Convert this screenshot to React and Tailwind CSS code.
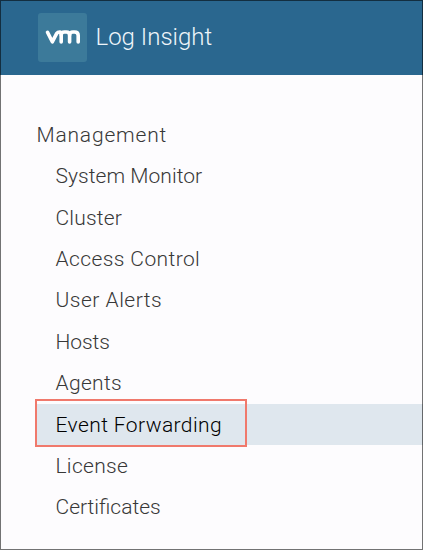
const items = [
  { label: "System Monitor", tracking: "tracking-[0.05px]" },
  { label: "Cluster", tracking: "tracking-[0.2px]" },
  { label: "Access Control", tracking: "tracking-[0.4px]" },
  { label: "User Alerts", tracking: "tracking-[0.5px]" },
  { label: "Hosts", tracking: "tracking-[-0.1px]" },
  { label: "Agents", tracking: "tracking-[0.3px]" },
  { label: "Event Forwarding", tracking: "tracking-[0.4px]", active: true },
  { label: "License", tracking: "tracking-[0.3px]" },
  { label: "Certificates", tracking: "tracking-[0px]" },
];

function Logo() {
  return (
    <div className="flex size-[49px] items-center justify-center rounded-[3px] bg-[#3c7a9a]">
      <svg width="36" height="16" viewBox="0 0 36 16" fill="none" stroke="#fff" strokeWidth="3.6" strokeLinecap="round" strokeLinejoin="round">
        <path d="M2.5 3.3 L7.3 12.8 L11.6 4.6 Q12.7 3 14.8 3 Q16.2 3 16.2 5 V13" />
        <path d="M16.2 6 Q16.2 3 19.4 3 H21.3 Q24.6 3 24.6 6 V13" />
        <path d="M24.6 6 Q24.6 3 28 3 H29.6 Q33.2 3 33.2 6.4 V13" />
      </svg>
    </div>
  );
}

export default function App() {
  return (
    <div className="relative h-[550px] w-[423px] overflow-hidden bg-[#fdfcfe] font-['Roboto',sans-serif] text-[21px] font-light text-[#383838]">
      <header className="flex h-[75.4px] items-start bg-[#2a678f] pt-[12.5px] pl-[38px]">
        <Logo />
        <h1 className="ml-[8.5px] text-[24px] leading-[49px] font-light tracking-[0px] text-[#eef5fa]">Log Insight</h1>
      </header>
      <nav className="pt-[38.5px]">
        <h2 className="flex h-[41.4px] items-center pt-[2px] pl-[36.5px] tracking-[0.8px]">Management</h2>
        <ul>
          {items.map(({ label, tracking, active }) => (
            <li
              key={label}
              className={`relative flex h-[41.4px] items-center pt-[2px] pl-[55.5px] ${tracking} ${
                active ? "bg-[#dfe7ee] text-black" : ""
              }`}
            >
              {active && (
                <span className="absolute -top-[5px] left-0 h-[48px] w-[36px] bg-[#fdfcfe]" />
              )}
              {active && (
                <span className="absolute -top-[5px] left-[35px] h-[48px] w-[212px] border-2 border-[#f0796c]" />
              )}
              <span className="whitespace-nowrap">{label}</span>
            </li>
          ))}
        </ul>
      </nav>
      <div className="pointer-events-none absolute inset-0 border border-black/55" />
    </div>
  );
}
